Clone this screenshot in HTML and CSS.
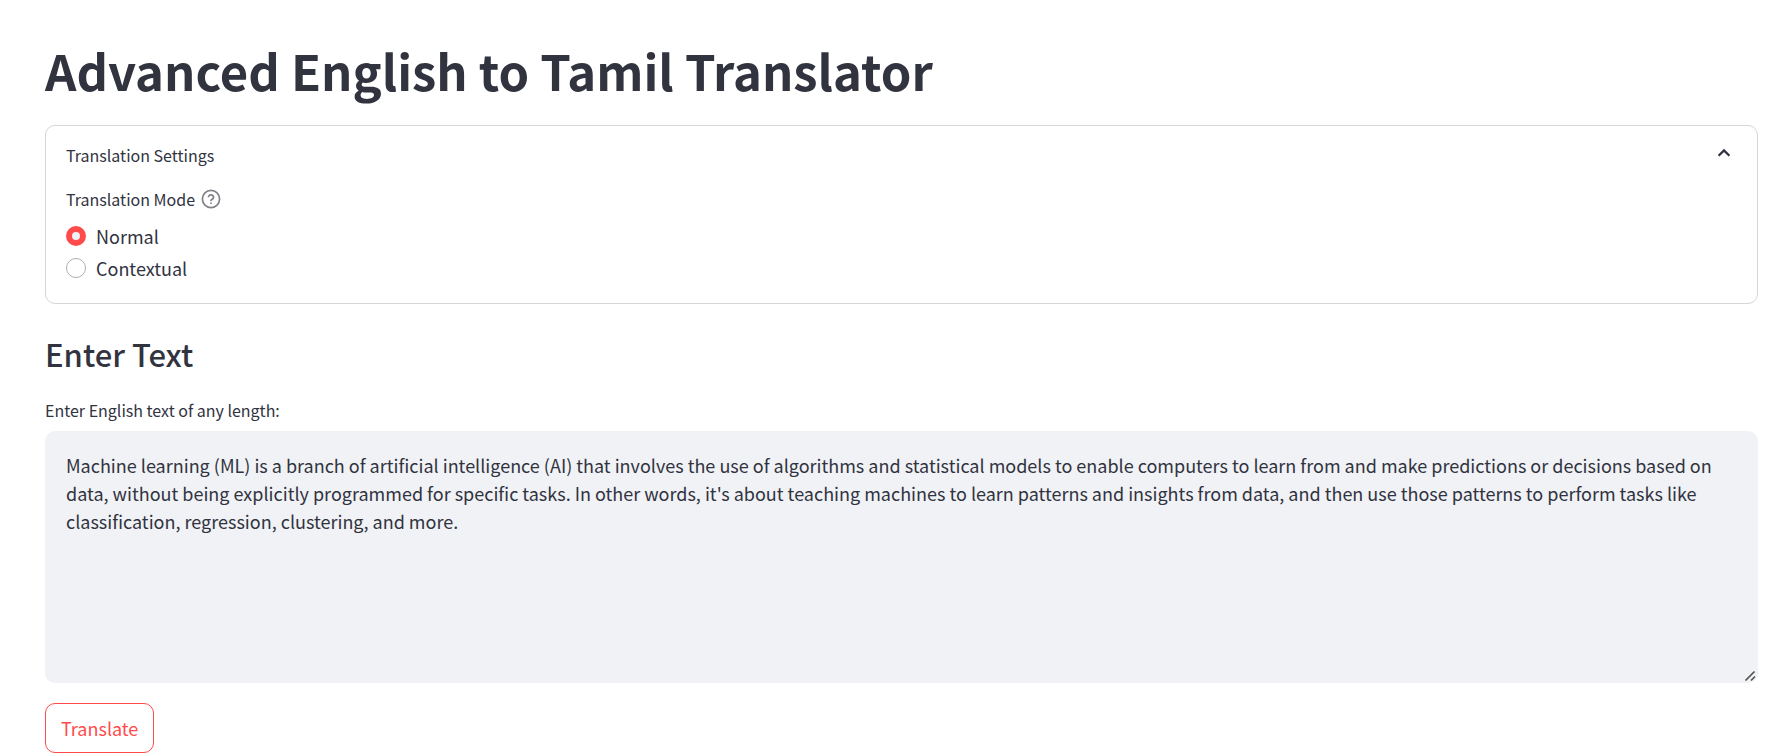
FILE: index.html
```
<!DOCTYPE html>
<html lang="en">
<head>
<meta charset="utf-8">
<meta name="viewport" content="width=device-width, initial-scale=1">
<title>Advanced English to Tamil Translator</title>
<link rel="stylesheet" href="styles.css">
</head>
<body>
<main class="page">
  <h1 class="title">Advanced English to Tamil Translator</h1>

  <details class="expander" open>
    <summary class="expander-header">
      <span>Translation Settings</span>
      <svg class="chevron" viewBox="0 0 20 20" aria-hidden="true"><path d="M4.6 12.8 10 7.4l5.4 5.4" fill="none" stroke="currentColor" stroke-width="2.3"/></svg>
    </summary>
    <fieldset class="mode">
      <legend class="mode-legend">
        <span class="mode-label">Translation Mode
          <button class="help" type="button" aria-label="Help">
            <svg viewBox="0 0 20 20" fill="none" stroke="currentColor" stroke-width="1.7" stroke-linecap="round" stroke-linejoin="round" aria-hidden="true">
              <circle cx="10" cy="10" r="8.6"/>
              <path d="M7.5 7.5a2.6 2.6 0 0 1 5 .9c0 1.7-2.5 2.2-2.5 3"/>
              <path d="M10 14.2v.1"/>
            </svg>
          </button>
        </span>
      </legend>
      <label class="option"><input class="radio" type="radio" name="mode" checked><span>Normal</span></label>
      <label class="option"><input class="radio" type="radio" name="mode"><span>Contextual</span></label>
    </fieldset>
  </details>

  <h2 class="subtitle">Enter Text</h2>

  <label class="field-label" for="source">Enter English text of any length:</label>
  <textarea class="source" id="source" spellcheck="false">Machine learning (ML) is a branch of artificial intelligence (AI) that involves the use of algorithms and statistical models to enable computers to learn from and make predictions or decisions based on data, without being explicitly programmed for specific tasks. In other words, it's about teaching machines to learn patterns and insights from data, and then use those patterns to perform tasks like classification, regression, clustering, and more.</textarea>

  <button class="translate" type="button">Translate</button>
</main>
</body>
</html>
```
FILE: styles.css
```
* {
  box-sizing: border-box;
}

body {
  margin: 0;
  background: #fff;
  color: #31333f;
  font-family: "Noto Sans CJK SC", "Open Sans", sans-serif;
  font-size: 18px;
  line-height: 28px;
}

.page {
  display: flex;
  flex-direction: column;
  padding: 37px 9px 0 45px;
}

.title {
  margin: 0 0 22px;
  font-size: 49px;
  font-weight: 700;
  line-height: 66px;
}

.expander {
  border: 1px solid #d6d6d9;
  border-radius: 10px;
  padding: 15px 20px 21px;
}

.expander-header {
  display: flex;
  align-items: flex-start;
  justify-content: space-between;
  font-size: 16px;
  cursor: pointer;
  list-style: none;
}

.chevron {
  width: 20px;
  height: 20px;
  margin: 2px 3px 0 0;
}

.mode {
  display: flex;
  flex-direction: column;
  gap: 4px;
  margin: 16px 0 0;
  border: 0;
  padding: 0;
}

.mode-legend {
  margin-bottom: 9px;
  padding: 0;
}

.mode-label {
  display: flex;
  align-items: center;
  gap: 6px;
  font-size: 16px;
}

.help {
  display: flex;
  border: 0;
  padding: 0;
  background: none;
  color: #808189;
}

.help svg {
  width: 20px;
  height: 20px;
}

.option {
  display: flex;
  align-items: center;
  gap: 10px;
}

.radio {
  appearance: none;
  width: 20px;
  height: 20px;
  margin: 0;
  border: 1px solid #adaeb2;
  border-radius: 50%;
  background: #fff;
}

.radio:checked {
  border: 6px solid #ff4b4b;
  background: #f0f2f6;
}

.subtitle {
  margin: 28px 0 0;
  font-size: 31px;
  font-weight: 500;
  line-height: 44px;
}

.field-label {
  margin: 20px 0 7px;
  font-size: 16px;
}

.source {
  display: block;
  width: 100%;
  height: 252px;
  border: 0;
  border-radius: 10px;
  padding: 20px 21px;
  background: #f0f2f6;
  color: inherit;
  font: inherit;
  resize: vertical;
}

.source::-webkit-resizer {
  background: url("data:image/svg+xml,%3Csvg xmlns='http://www.w3.org/2000/svg' width='15' height='15' viewBox='0 0 15 15'%3E%3Cpath d='M2.5 12.5l9-9M8 12.5l4-4' stroke='%23555' stroke-width='1.7'/%3E%3C/svg%3E") no-repeat right bottom;
}

.translate {
  align-self: flex-start;
  margin-top: 20px;
  border: 1px solid #ff4b4b;
  border-radius: 10px;
  padding: 10px 15px;
  background: #fff;
  color: #ff4b4b;
  font: inherit;
}
```
